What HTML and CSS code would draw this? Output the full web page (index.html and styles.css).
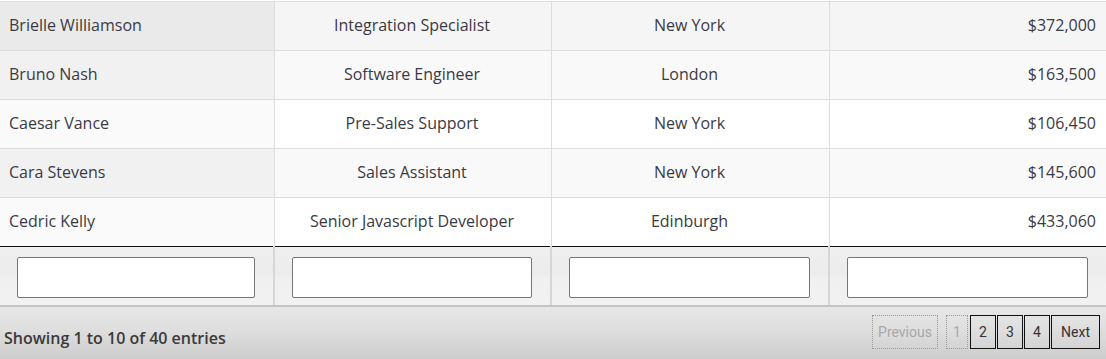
FILE: index.html
```html
<!DOCTYPE html>
<html>
<head>
<meta charset="utf-8">
<link rel="stylesheet" href="styles.css">
</head>
<body>
<div class="wrap">
  <table class="grid">
    <colgroup>
      <col class="col1">
      <col class="col2">
      <col class="col3">
      <col class="col4">
    </colgroup>
    <tbody>
      <tr class="row hover"><td class="sorted">Brielle Williamson</td><td class="c">Integration Specialist</td><td class="c">New York</td><td class="r">$372,000</td></tr>
      <tr class="row odd"><td class="sorted">Bruno Nash</td><td class="c">Software Engineer</td><td class="c">London</td><td class="r">$163,500</td></tr>
      <tr class="row even"><td class="sorted">Caesar Vance</td><td class="c">Pre-Sales Support</td><td class="c">New York</td><td class="r">$106,450</td></tr>
      <tr class="row odd"><td class="sorted">Cara Stevens</td><td class="c">Sales Assistant</td><td class="c">New York</td><td class="r">$145,600</td></tr>
      <tr class="row even last"><td class="sorted">Cedric Kelly</td><td class="c">Senior Javascript Developer</td><td class="c">Edinburgh</td><td class="r">$433,060</td></tr>
    </tbody>
    <tfoot>
      <tr class="filters">
        <th><input class="filter" type="text"></th>
        <th><input class="filter" type="text"></th>
        <th><input class="filter" type="text"></th>
        <th><input class="filter" type="text"></th>
      </tr>
    </tfoot>
  </table>
  <div class="bottom">
    <div class="info">Showing 1 to 10 of 40 entries</div>
    <div class="paging">
      <span class="btn disabled prev">Previous</span>
      <span class="btn current">1</span>
      <span class="btn">2</span>
      <span class="btn">3</span>
      <span class="btn">4</span>
      <span class="btn next">Next</span>
    </div>
  </div>
</div>
</body>
</html>
```
FILE: styles.css
```css
html, body {
  margin: 0;
  padding: 0;
  background: #ffffff;
}
body {
  padding-top: 1px;
  font-family: "Open Sans", "Liberation Sans", sans-serif;
  font-size: 16px;
  color: #3a3a44;
}
.wrap {
  width: 1106px;
}
.grid {
  width: 100%;
  border-collapse: collapse;
  table-layout: fixed;
}
.col1 { width: 274px; }
.col2 { width: 277px; }
.col3 { width: 278px; }
.col4 { width: 277px; }
.grid td {
  height: 45px;
  padding: 0 10px 3px 9px;
  border-top: 1px solid #dddddd;
  border-left: 1px solid #dddddd;
  box-sizing: content-box;
  white-space: nowrap;
  line-height: 20px;
}
.grid td:first-child {
  border-left: none;
}
.grid td.c { text-align: center; }
.grid td.r { text-align: right; }
.row.hover td { background: #f5f5f5; }
.row.hover td.sorted { background: #eaeaea; }
.row.odd td { background: #f9f9f9; }
.row.odd td.sorted { background: #f1f1f1; }
.row.even td { background: #ffffff; }
.row.even td.sorted { background: #fafafa; }

.filters th {
  border-top: 1px solid #111111;
  border-bottom: 2px solid #c4c4c4;
  border-left: 2px solid #d6d6d6;
  padding: 10px 18px 7px 17px;
  background: linear-gradient(#efefef 0%, #ececec 45%, #f0f0f0 55%, #f1f1f1 100%);
  height: 41px;
  box-sizing: content-box;
}
.filters th:first-child { border-left: none; }
.filter {
  display: block;
  width: 100%;
  height: 41px;
  box-sizing: border-box;
  margin: 0;
  border: 1px solid #767676;
  border-radius: 2px;
  background: #ffffff;
}

.bottom {
  display: flex;
  justify-content: space-between;
  align-items: flex-start;
  height: 53px;
  padding: 0 6px 0 4px;
  background: linear-gradient(#e7e7e7 0%, #dedede 45%, #cccccc 100%);
}
.info {
  font-weight: 600;
  font-size: 16px;
  color: #3a3a3a;
  padding-top: 20px;
  line-height: 22px;
}
.paging {
  display: flex;
  gap: 1px;
  align-items: center;
  padding-top: 8px;
}
.btn {
  display: flex;
  align-items: center;
  justify-content: center;
  height: 34px;
  box-sizing: border-box;
  min-width: 26px;
  padding: 0 5px;
  border: 1px solid #111111;
  font-size: 14px;
  color: #333333;
  font-family: Roboto, "Liberation Sans", sans-serif;
}
.btn.disabled {
  border: 1px dotted #999999;
  color: #a8a8a8;
  width: 66px;
  margin-right: 7px;
}
.btn.current {
  border: 1px dotted #999999;
  color: #a8a8a8;
  width: 22px;
  min-width: 22px;
  margin-right: 1px;
}
.btn.next {
  width: 49px;
}
```
